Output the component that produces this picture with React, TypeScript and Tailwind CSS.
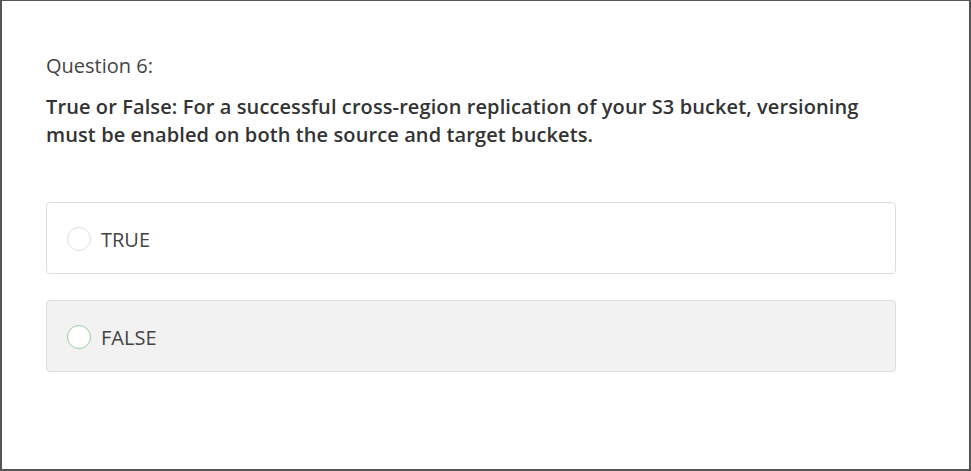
export default function App() {
  const options = [
    { label: "TRUE", selected: false },
    { label: "FALSE", selected: true },
  ];

  return (
    <main
      className="box-border h-[471px] w-[971px] border-2 border-t border-[#555555] bg-white"
      style={{ fontFamily: '"Open Sans", sans-serif' }}
    >
      <div className="w-[894px] pl-[44px] pt-[51px]">
        <p className="text-[20px] leading-[28px] text-[#444444]">Question 6:</p>
        <h1 className="mt-[13px] text-[20px] font-semibold leading-[28px] tracking-[0.1px] text-[#333333]">
          True or False: For a successful cross-region replication of your S3 bucket, versioning
          must be enabled on both the source and target buckets.
        </h1>

        <div className="mt-[53px] flex flex-col gap-[26px]">
          {options.map((opt) => (
            <label
              key={opt.label}
              className={`flex h-[72px] items-center gap-[10px] rounded-[4px] border border-[#dddddd] px-[20px] ${
                opt.selected ? "bg-[#f2f2f2]" : "bg-white"
              }`}
            >
              <span
                className={`mt-[2px] h-[24px] w-[24px] rounded-full border bg-white ${
                  opt.selected ? "border-[#8fd19e]" : "border-[#dddddd]"
                }`}
              />
              <span className="pt-[4px] text-[20px] text-[#444444]">{opt.label}</span>
            </label>
          ))}
        </div>
      </div>
    </main>
  );
}
